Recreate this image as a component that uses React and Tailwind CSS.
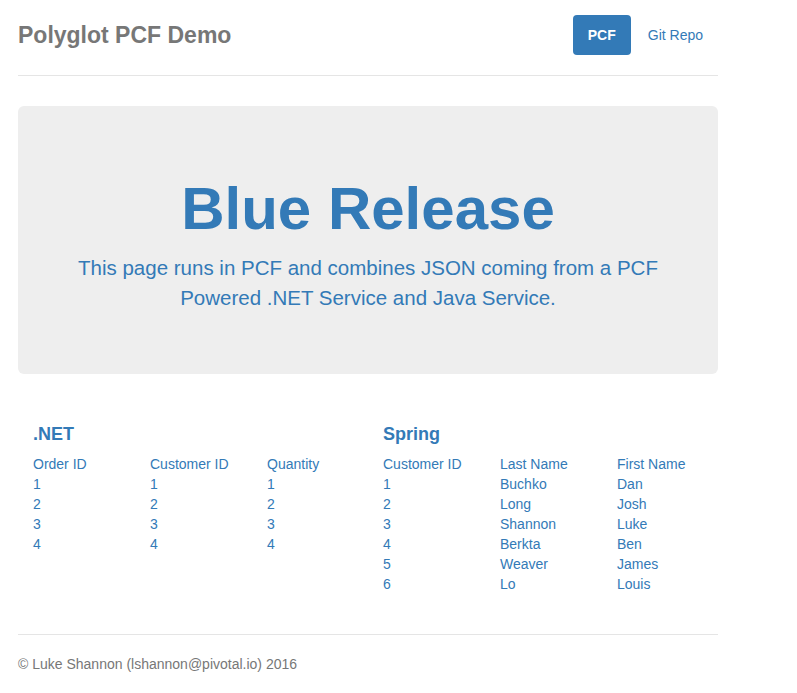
import React from "react";

const netRows = [
  ["1", "1", "1"],
  ["2", "2", "2"],
  ["3", "3", "3"],
  ["4", "4", "4"],
];

const springRows = [
  ["1", "Buchko", "Dan"],
  ["2", "Long", "Josh"],
  ["3", "Shannon", "Luke"],
  ["4", "Berkta", "Ben"],
  ["5", "Weaver", "James"],
  ["6", "Lo", "Louis"],
];

const DataTable = ({ title, headers, rows }) => (
  <div className="w-[350px] px-[15px]">
    <h4 className="mt-[10px] mb-[10px] text-[18px] leading-[20px] font-bold text-[#337ab7]">{title}</h4>
    <div className="grid grid-cols-[117px_117px_117px] text-[14px] leading-[20px] text-[#337ab7]">
      {headers.map((h) => (
        <div key={h}>{h}</div>
      ))}
      {rows.map((row, i) =>
        row.map((cell, j) => <div key={`${i}-${j}`}>{cell}</div>)
      )}
    </div>
  </div>
);

export default function App() {
  return (
    <div className="bg-white min-h-screen pt-[15px] font-['Liberation_Sans',Arial,sans-serif] text-[#333]">
      <div className="ml-[18px] w-[700px]">
        {/* Header */}
        <div className="flex items-center justify-between pb-[20px] border-b border-[#e5e5e5]">
          <h3 className="text-[23px] leading-[40px] text-[#777] font-bold">Polyglot PCF Demo</h3>
          <div className="flex items-center gap-[2px] text-[14px] leading-[20px]">
            <span className="bg-[#337ab7] text-white rounded-[4px] px-[15px] py-[10px] font-bold">PCF</span>
            <span className="text-[#337ab7] px-[15px] py-[10px]">Git Repo</span>
          </div>
        </div>

        {/* Jumbotron */}
        <div className="mt-[30px] bg-[#eeeeee] rounded-[6px] py-[48px] px-[50px] text-center text-[#337ab7]">
          <h1 className="mt-[20px] mb-[10px] text-[60px] leading-[69px] font-bold">Blue Release</h1>
          <p className="mb-[13px] text-[20.5px] leading-[30px]">
            This page runs in PCF and combines JSON coming from a PCF Powered .NET Service and Java Service.
          </p>
        </div>

        {/* Data */}
        <div className="flex mt-[40px] mb-[40px]">
          <DataTable title=".NET" headers={["Order ID", "Customer ID", "Quantity"]} rows={netRows} />
          <DataTable title="Spring" headers={["Customer ID", "Last Name", "First Name"]} rows={springRows} />
        </div>

        {/* Footer */}
        <div className="border-t border-[#e5e5e5] pt-[19px] text-[14px] leading-[20px] text-[#777]">
          © Luke Shannon (lshannon@pivotal.io) 2016
        </div>
      </div>
    </div>
  );
}
